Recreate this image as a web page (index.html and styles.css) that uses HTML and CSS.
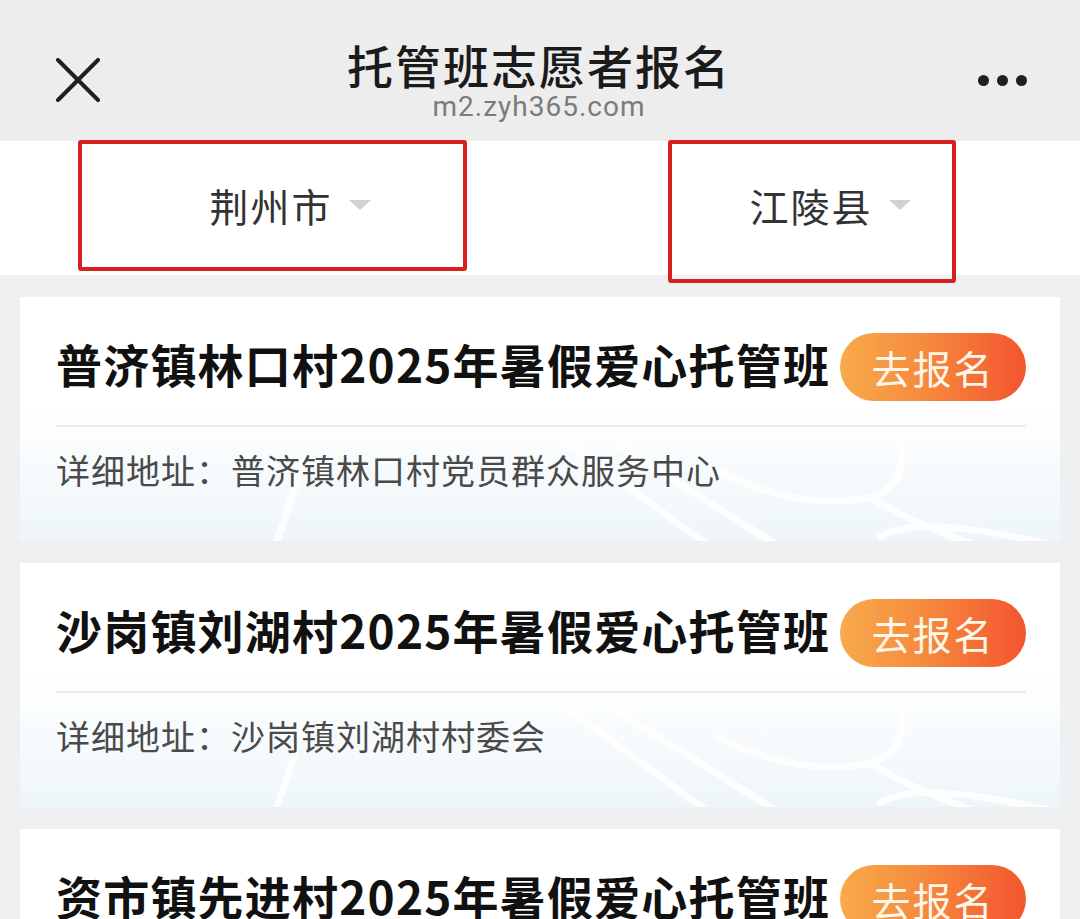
FILE: index.html
```html
<!DOCTYPE html>
<html lang="zh-CN">
<head>
<meta charset="utf-8">
<title>托管班志愿者报名</title>
<link rel="stylesheet" href="styles.css">
</head>
<body>
<div class="page">
  <header class="topbar">
    <svg class="close" viewBox="0 0 44 44" width="44" height="44"><path d="M2 2 L42 42 M42 2 L2 42" stroke="#1f1f1f" stroke-width="4" stroke-linecap="round"/></svg>
    <div class="titles">
      <div class="title">托管班志愿者报名</div>
      <div class="url">m2.zyh365.com</div>
    </div>
    <div class="more"><span></span><span></span><span></span></div>
  </header>

  <div class="filters">
    <div class="filter"><span class="ftext">荆州市</span><span class="caret"></span></div>
    <div class="filter"><span class="ftext">江陵县</span><span class="caret"></span></div>
    <div class="mark mark-a"></div>
    <div class="mark mark-b"></div>
  </div>

  <main class="list">
    <section class="card">
      <svg class="deco" viewBox="0 0 1040 244" preserveAspectRatio="none"><g fill="none" stroke="#ffffff" stroke-width="7" stroke-linecap="round"><path d="M255 250 L285 160"/><path d="M540 140 L690 250"/><path d="M600 150 L760 250"/><path d="M700 175 Q780 215 850 200 Q890 190 880 140"/><path d="M860 240 Q900 215 1040 250"/><path d="M850 200 Q890 225 960 250"/></g></svg>
      <div class="row">
        <h2 class="name">普济镇林口村2025年暑假爱心托管班</h2>
        <button class="go">去报名</button>
      </div>
      <div class="addr">详细地址：普济镇林口村党员群众服务中心</div>
    </section>
    <section class="card">
      <svg class="deco" viewBox="0 0 1040 244" preserveAspectRatio="none"><g fill="none" stroke="#ffffff" stroke-width="7" stroke-linecap="round"><path d="M255 250 L285 160"/><path d="M540 140 L690 250"/><path d="M600 150 L760 250"/><path d="M700 175 Q780 215 850 200 Q890 190 880 140"/><path d="M860 240 Q900 215 1040 250"/><path d="M850 200 Q890 225 960 250"/></g></svg>
      <div class="row">
        <h2 class="name">沙岗镇刘湖村2025年暑假爱心托管班</h2>
        <button class="go">去报名</button>
      </div>
      <div class="addr">详细地址：沙岗镇刘湖村村委会</div>
    </section>
    <section class="card">
      <svg class="deco" viewBox="0 0 1040 244" preserveAspectRatio="none"><g fill="none" stroke="#ffffff" stroke-width="7" stroke-linecap="round"><path d="M255 250 L285 160"/><path d="M540 140 L690 250"/><path d="M600 150 L760 250"/><path d="M700 175 Q780 215 850 200 Q890 190 880 140"/><path d="M860 240 Q900 215 1040 250"/><path d="M850 200 Q890 225 960 250"/></g></svg>
      <div class="row">
        <h2 class="name">资市镇先进村2025年暑假爱心托管班</h2>
        <button class="go">去报名</button>
      </div>
      <div class="addr">详细地址：资市镇先进村村委会</div>
    </section>
  </main>
</div>
</body>
</html>
```

FILE: styles.css
```css
* { box-sizing: border-box; }
html, body { margin: 0; padding: 0; }
body {
  width: 1080px;
  height: 919px;
  overflow: hidden;
  background: #eff0f2;
  font-family: "Noto Sans CJK SC", "Noto Sans", sans-serif;
}
.page { display: flex; flex-direction: column; }

.topbar {
  height: 141px;
  background: #ededed;
  display: flex;
  align-items: center;
  padding: 20px 53px 0 56px;
  justify-content: space-between;
}
.close { display: block; margin-top: -2px; }
.titles {
  display: flex;
  flex-direction: column;
  align-items: center;
}
.title {
  font-size: 46px;
  line-height: 48px;
  font-weight: 500;
  color: #1b1b1b;
  letter-spacing: 2px;
}
.url {
  font-family: "Roboto", "Noto Sans", sans-serif;
  font-size: 28px;
  line-height: 30px;
  color: #7b7b7b;
  letter-spacing: 1px;
  margin-top: 4px;
}
.more { display: flex; gap: 8px; align-items: center; }
.more span {
  width: 11px; height: 11px; border-radius: 50%;
  background: #1f1f1f;
}

.filters {
  position: relative;
  height: 134px;
  background: #fff;
  display: grid;
  grid-template-columns: 1fr 1fr;
}
.filter {
  display: flex;
  align-items: center;
  justify-content: center;
  padding-left: 40px;
}
.ftext {
  font-size: 39px;
  color: #333;
  letter-spacing: 2px;
  margin-top: -6px;
}
.caret {
  width: 0; height: 0;
  border-left: 11px solid transparent;
  border-right: 11px solid transparent;
  border-top: 10px solid #d2d2d2;
  margin-left: 16px;
  margin-top: -6px;
}
.mark {
  position: absolute;
  border: 4px solid #d8211f;
  border-radius: 3px;
}
.mark-a { left: 78px; top: -1px; width: 389px; height: 131px; }
.mark-b { left: 668px; top: -1px; width: 288px; height: 143px; }

.list {
  padding: 22px 20px 0;
  display: flex;
  flex-direction: column;
  gap: 22px;
}
.card {
  position: relative;
  height: 244px;
  background: linear-gradient(180deg, #ffffff 0%, #ffffff 45%, #eef6fa 100%);
  padding: 36px 34px 0 36px;
  overflow: hidden;
}
.deco {
  position: absolute;
  left: 0; top: 0;
  width: 100%; height: 100%;
  opacity: 0.9;
}
.row {
  position: relative;
  display: flex;
  align-items: center;
  justify-content: space-between;
  height: 68px;
}
.name {
  margin: -8px 0 0;
  font-size: 46px;
  font-weight: 700;
  color: #111;
  letter-spacing: 1.2px;
  white-space: nowrap;
}
.go {
  width: 186px;
  height: 68px;
  border: none;
  border-radius: 34px;
  background: linear-gradient(90deg, #f8ab4c 0%, #f58a3d 45%, #f4552f 100%);
  color: #fff7ea;
  font-family: "Noto Sans CJK SC", sans-serif;
  font-size: 39px;
  letter-spacing: 2px;
  padding: 0;
}
.addr {
  position: relative;
  margin-top: 24px;
  border-top: 2px solid #ececec;
  padding-top: 20px;
  font-size: 34px;
  color: #4a4a4a;
  letter-spacing: 1px;
  line-height: 46px;
}
```
